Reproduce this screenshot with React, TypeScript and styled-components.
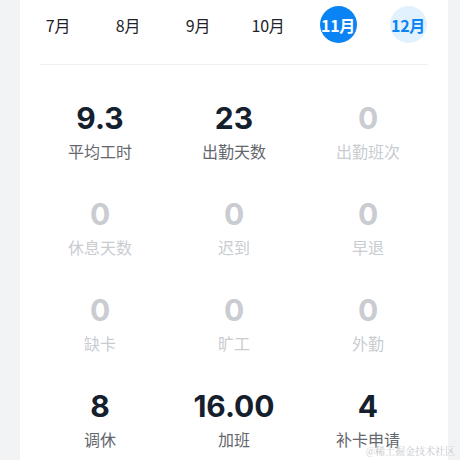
import React from "react";
import styled, { createGlobalStyle } from "styled-components";

const Global = createGlobalStyle`
  html, body { margin: 0; padding: 0; background: #f2f3f5; }
  body { font-family: "Noto Sans", "Noto Sans CJK SC", sans-serif; }
`;

const Page = styled.div`
  position: relative;
  width: 460px;
  height: 460px;
  overflow: hidden;
  background: #f2f3f5;
`;

const Card = styled.div`
  margin-left: 20px;
  width: 428px;
  height: 460px;
  background: #ffffff;
  box-sizing: border-box;
`;

const MonthRow = styled.div`
  display: flex;
  padding: 6px 0 0 3px;
`;

const Month = styled.div`
  width: 70px;
  height: 37px;
  display: flex;
  align-items: center;
  justify-content: center;
`;

const MonthLabel = styled.span<{ $state?: "active" | "next" }>`
  width: 37px;
  height: 37px;
  border-radius: 50%;
  display: flex;
  align-items: center;
  justify-content: center;
  font-size: 16px;
  letter-spacing: -0.3px;
  font-family: "Noto Sans CJK SC", sans-serif;
  font-weight: ${(p) => (p.$state ? 700 : 400)};
  color: ${(p) => (p.$state === "active" ? "#ffffff" : p.$state === "next" ? "#0a84f5" : "#1f2329")};
  background: ${(p) => (p.$state === "active" ? "#0a84f5" : p.$state === "next" ? "#e1f1fe" : "transparent")};
  white-space: nowrap;
`;

const Divider = styled.div`
  margin: 21px 20px 0 20px;
  height: 1px;
  background: #eef0f2;
`;

const Grid = styled.div`
  display: grid;
  grid-template-columns: repeat(3, 134px);
  row-gap: 34px;
  padding: 35px 0 0 13px;
`;

const Cell = styled.div`
  display: flex;
  flex-direction: column;
  align-items: center;
  height: 62px;
`;

const Value = styled.div<{ $muted?: boolean }>`
  font-family: "Inter", "Noto Sans", sans-serif;
  font-weight: 700;
  font-size: 30px;
  line-height: 36px;
  height: 36px;
  color: ${(p) => (p.$muted ? "#c9ccd1" : "#14202e")};
`;

const Label = styled.div<{ $muted?: boolean }>`
  margin-top: 4px;
  font-family: "Noto Sans CJK SC", sans-serif;
  font-size: 16px;
  line-height: 22px;
  color: ${(p) => (p.$muted ? "#c9ccd1" : "#64676d")};
`;

const Watermark = styled.div`
  position: absolute;
  right: 5px;
  bottom: 3px;
  font-family: "Noto Serif CJK SC", "Noto Sans CJK SC", serif;
  font-size: 10px;
  line-height: 12px;
  color: #c4c6ca;
`;

const months = [
  { m: "7月" },
  { m: "8月" },
  { m: "9月" },
  { m: "10月" },
  { m: "11月", s: "active" as const },
  { m: "12月", s: "next" as const },
];

const stats = [
  { v: "9.3", l: "平均工时" },
  { v: "23", l: "出勤天数" },
  { v: "0", l: "出勤班次", muted: true },
  { v: "0", l: "休息天数", muted: true },
  { v: "0", l: "迟到", muted: true },
  { v: "0", l: "早退", muted: true },
  { v: "0", l: "缺卡", muted: true },
  { v: "0", l: "旷工", muted: true },
  { v: "0", l: "外勤", muted: true },
  { v: "8", l: "调休" },
  { v: "16.00", l: "加班" },
  { v: "4", l: "补卡申请" },
];

export default function App() {
  return (
    <Page>
      <Global />
      <Card>
        <MonthRow>
          {months.map((x) => (
            <Month key={x.m}>
              <MonthLabel $state={x.s}>{x.m}</MonthLabel>
            </Month>
          ))}
        </MonthRow>
        <Divider />
        <Grid>
          {stats.map((s) => (
            <Cell key={s.l}>
              <Value $muted={s.muted}>{s.v}</Value>
              <Label $muted={s.muted}>{s.l}</Label>
            </Cell>
          ))}
        </Grid>
      </Card>
      <Watermark>@稀土掘金技术社区</Watermark>
    </Page>
  );
}
